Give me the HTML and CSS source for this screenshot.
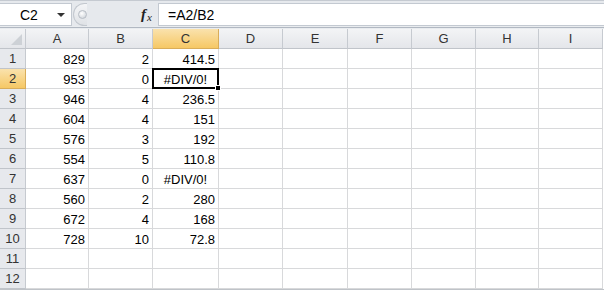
FILE: index.html
```html
<!DOCTYPE html>
<html>
<head>
<meta charset="utf-8">
<link rel="stylesheet" href="styles.css">
</head>
<body>
<div class="app">
  <div class="fbar">
    <div class="namebox">
      <span class="name">C2</span>
      <span class="arrow"></span>
    </div>
    <div class="splitter"><span class="knob"></span></div>
    <div class="fx"><i>f</i><span class="x">x</span></div>
    <div class="formula">=A2/B2</div>
  </div>
  <div class="sheet">
    <div class="hd corner"><span class="tri"></span></div>
    <div class="hd">A</div><div class="hd">B</div><div class="hd sel">C</div><div class="hd">D</div><div class="hd">E</div><div class="hd">F</div><div class="hd">G</div><div class="hd">H</div><div class="hd">I</div>

    <div class="rh">1</div><div class="c">829</div><div class="c">2</div><div class="c">414.5</div><div class="c"></div><div class="c"></div><div class="c"></div><div class="c"></div><div class="c"></div><div class="c"></div>
    <div class="rh sel">2</div><div class="c">953</div><div class="c">0</div><div class="c err active">#DIV/0!<span class="handle"></span></div><div class="c"></div><div class="c"></div><div class="c"></div><div class="c"></div><div class="c"></div><div class="c"></div>
    <div class="rh">3</div><div class="c">946</div><div class="c">4</div><div class="c">236.5</div><div class="c"></div><div class="c"></div><div class="c"></div><div class="c"></div><div class="c"></div><div class="c"></div>
    <div class="rh">4</div><div class="c">604</div><div class="c">4</div><div class="c">151</div><div class="c"></div><div class="c"></div><div class="c"></div><div class="c"></div><div class="c"></div><div class="c"></div>
    <div class="rh">5</div><div class="c">576</div><div class="c">3</div><div class="c">192</div><div class="c"></div><div class="c"></div><div class="c"></div><div class="c"></div><div class="c"></div><div class="c"></div>
    <div class="rh">6</div><div class="c">554</div><div class="c">5</div><div class="c">110.8</div><div class="c"></div><div class="c"></div><div class="c"></div><div class="c"></div><div class="c"></div><div class="c"></div>
    <div class="rh">7</div><div class="c">637</div><div class="c">0</div><div class="c err">#DIV/0!</div><div class="c"></div><div class="c"></div><div class="c"></div><div class="c"></div><div class="c"></div><div class="c"></div>
    <div class="rh">8</div><div class="c">560</div><div class="c">2</div><div class="c">280</div><div class="c"></div><div class="c"></div><div class="c"></div><div class="c"></div><div class="c"></div><div class="c"></div>
    <div class="rh">9</div><div class="c">672</div><div class="c">4</div><div class="c">168</div><div class="c"></div><div class="c"></div><div class="c"></div><div class="c"></div><div class="c"></div><div class="c"></div>
    <div class="rh">10</div><div class="c">728</div><div class="c">10</div><div class="c">72.8</div><div class="c"></div><div class="c"></div><div class="c"></div><div class="c"></div><div class="c"></div><div class="c"></div>
    <div class="rh">11</div><div class="c"></div><div class="c"></div><div class="c"></div><div class="c"></div><div class="c"></div><div class="c"></div><div class="c"></div><div class="c"></div><div class="c"></div>
    <div class="rh">12</div><div class="c"></div><div class="c"></div><div class="c"></div><div class="c"></div><div class="c"></div><div class="c"></div><div class="c"></div><div class="c"></div><div class="c"></div>
  </div>
</div>
</body>
</html>
```

FILE: styles.css
```css
* { box-sizing: border-box; }
html, body { margin: 0; padding: 0; background: #fff; }
body {
  width: 604px;
  height: 290px;
  overflow: hidden;
  font-family: "Liberation Sans", Arial, sans-serif;
  font-size: 13px;
  color: #000;
}
.app { display: flex; flex-direction: column; }

.fbar {
  height: 29px;
  display: flex;
  align-items: stretch;
  background: #e6e9ed;
  border-top: 1px solid #c5cad1;
  border-bottom: 3px solid #e9ecef;
  padding-top: 2px;
  position: relative;
}
.fbar::after {
  content: "";
  position: absolute;
  left: 0; right: 0; bottom: -2px;
  height: 1px;
  background: #b1b8c2;
}
.namebox {
  width: 72px;
  background: #fff;
  border: 1px solid #c3c9d1;
  border-left: none;
  display: flex;
  align-items: center;
  padding-left: 20px;
  font-size: 14px;
}
.name { flex: 1; }
.arrow {
  width: 0; height: 0;
  border-left: 4px solid transparent;
  border-right: 4px solid transparent;
  border-top: 4px solid #333;
  margin-right: 6px;
  margin-top: 1px;
}
.splitter {
  width: 14px;
  margin-left: 1px;
  display: flex;
  align-items: center;
  justify-content: center;
  border-radius: 12px 0 0 12px;
  background: linear-gradient(#f4f5f7, #dfe2e6);
  border: 1px solid #c3c8cf;
  border-right: none;
}
.knob {
  width: 9px; height: 9px;
  border-radius: 50%;
  background: radial-gradient(circle at 40% 35%, #ffffff, #c9ced5);
  border: 1px solid #b7bdc5;
  margin-left: 3px;
}
.fx {
  width: 71px;
  display: flex;
  align-items: center;
  justify-content: flex-end;
  padding-right: 6px;
  font-family: "Liberation Serif", serif;
  font-size: 15px;
  color: #222;
}
.fx i { font-style: italic; font-weight: bold; }
.fx .x { font-style: italic; font-size: 11px; margin-top: 4px; margin-left: 1px; }
.formula {
  flex: 1;
  background: #fff;
  border: 1px solid #c3c9d1;
  border-right: none;
  display: flex;
  align-items: center;
  padding-left: 9px;
  font-size: 14px;
}

.sheet {
  display: grid;
  grid-template-columns: 26px 63px 64px 66px 64px 65px 64px 64px 63px 64px;
  grid-auto-rows: 20px;
  border-bottom: 1px solid #bfc3c8;
}
.hd, .rh {
  background: linear-gradient(#f3f4f6, #e4e6ea);
  border-right: 1px solid #c6cad0;
  border-bottom: 1px solid #c0c4ca;
  color: #333;
  display: flex;
  align-items: center;
  justify-content: center;
  font-size: 13px;
}
.rh { background: #e7e9ed; }
.hd.sel, .rh.sel {
  background: linear-gradient(#fae2ad, #f6c865);
  border-color: #d9ad59;
}
.corner { position: relative; }
.tri {
  position: absolute;
  right: 3px; bottom: 3px;
  width: 0; height: 0;
  border-left: 11px solid transparent;
  border-bottom: 11px solid #cdd1d6;
}
.c {
  border-right: 1px solid #d8d9db;
  border-bottom: 1px solid #d8d9db;
  display: flex;
  align-items: center;
  justify-content: flex-end;
  padding-right: 3px;
  padding-top: 1px;
}
.c.err { justify-content: center; padding-right: 0; }
.c.active {
  position: relative;
  border: 2px solid #000;
  margin: -1px 0 0 -1px;
}
.handle {
  position: absolute;
  right: -4px; bottom: -4px;
  width: 6px; height: 6px;
  background: #000;
  border: 1px solid #fff;
}
```
